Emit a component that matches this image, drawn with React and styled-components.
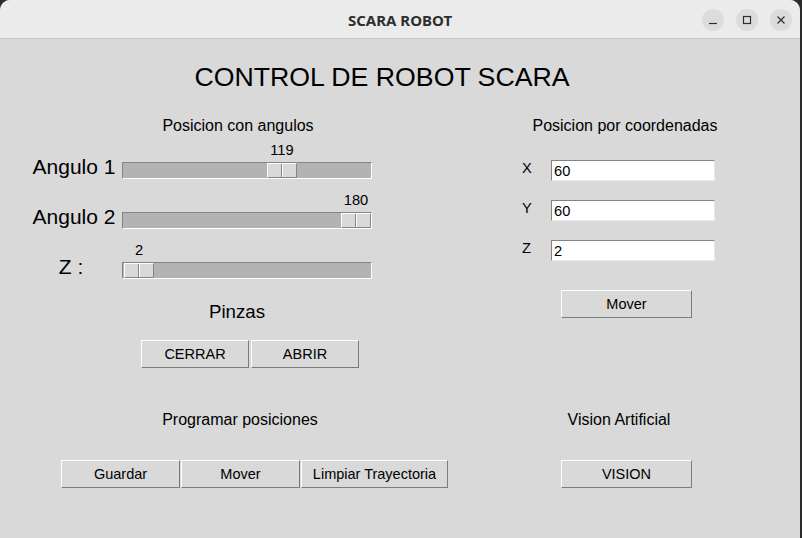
import React from "react";
import styled, { createGlobalStyle } from "styled-components";

const GlobalStyle = createGlobalStyle`
  html, body {
    margin: 0;
    padding: 0;
    background: #2a2a2a;
  }
  body {
    width: 802px;
    height: 538px;
    overflow: hidden;
    font-family: "Liberation Sans", Arial, sans-serif;
  }
`;

const Window = styled.div`
  width: 800px;
  height: 538px;
  display: flex;
  flex-direction: column;
  background: #d9d9d9;
  border-radius: 10px 10px 0 0;
  overflow: hidden;
`;

const TitleBar = styled.div`
  height: 38px;
  flex: none;
  display: grid;
  grid-template-columns: 1fr auto 1fr;
  align-items: center;
  background: #ebebeb;
  border-bottom: 1px solid #c6c6c6;
`;

const WinTitle = styled.div`
  grid-column: 2;
  font-family: "Noto Sans", "DejaVu Sans", sans-serif;
  font-weight: 700;
  font-size: 15px;
  color: #2e2e2e;
  padding-top: 2px;
`;

const WinControls = styled.div`
  grid-column: 3;
  justify-self: end;
  display: flex;
  gap: 12px;
  padding-right: 8px;
  padding-top: 2px;
`;

const WinButton = styled.div`
  width: 22px;
  height: 22px;
  border-radius: 50%;
  background: #dcdcdc;
  display: flex;
  align-items: center;
  justify-content: center;
`;

const Body = styled.div`
  flex: 1;
  display: flex;
  flex-direction: column;
`;

const Heading = styled.h1`
  margin: 23px 0 0 0;
  padding-right: 36px;
  font-weight: 400;
  font-size: 26.7px;
  line-height: 30px;
  text-align: center;
  color: #000;
`;

const Panels = styled.div`
  margin-top: 18px;
  display: grid;
  grid-template-columns: 480px 290px;
  grid-template-rows: 294px auto;
`;

const Column = styled.div`
  display: flex;
  flex-direction: column;
`;

const SectionTitle = styled.div`
  font-size: 16px;
  line-height: 32px;
  text-align: center;
  color: #000;
  padding-right: ${(p) => p.$shift || 0}px;
`;

const ScaleRow = styled.div`
  display: grid;
  grid-template-columns: 122px 250px;
  align-items: end;
  margin-bottom: 13px;
`;

const ScaleLabel = styled.div`
  padding-left: 26px;
  font-size: 21px;
  line-height: 24px;
  text-align: center;
  white-space: pre;
  color: #000;
`;

const ScaleBox = styled.div`
  display: flex;
  flex-direction: column;
`;

const ValueText = styled.div`
  width: 30px;
  font-size: 14.67px;
  line-height: 17px;
  text-align: center;
  margin-bottom: 3px;
  color: #000;
`;

const Trough = styled.div`
  box-sizing: border-box;
  width: 250px;
  height: 17px;
  background: #b3b3b3;
  border: 1px solid;
  border-color: #858585 #ffffff #ffffff #858585;
  display: flex;
`;

const Thumb = styled.div`
  box-sizing: border-box;
  width: 30px;
  height: 15px;
  background: #d9d9d9;
  border: 1px solid;
  border-color: #ffffff #858585 #858585 #ffffff;
  display: flex;
  justify-content: center;
`;

const ThumbLine = styled.div`
  width: 1px;
  height: 100%;
  background: #858585;
  border-right: 1px solid #ffffff;
`;

const SubTitle = styled.div`
  margin-top: 8px;
  font-size: 18.7px;
  line-height: 24px;
  text-align: center;
  padding-right: 6px;
  color: #000;
`;

const ButtonRow = styled.div`
  display: flex;
  gap: ${(p) => p.$gap}px;
  padding-left: ${(p) => p.$left}px;
  margin-top: ${(p) => p.$top}px;
`;

const TkButton = styled.button`
  box-sizing: border-box;
  width: ${(p) => p.$w}px;
  height: 28px;
  padding: 0;
  margin: 0;
  background: #d9d9d9;
  border: 1px solid;
  border-color: #ffffff #7c7c7c #7c7c7c #ffffff;
  border-radius: 0;
  font-family: "Liberation Sans", Arial, sans-serif;
  font-size: 14.5px;
  color: #000;
`;

const EntryGrid = styled.div`
  margin-top: 18px;
  display: grid;
  grid-template-columns: 29px 164px;
  row-gap: 19px;
  padding-left: 42px;
`;

const EntryLabel = styled.div`
  font-size: 14.67px;
  line-height: 16px;
  color: #000;
`;

const Entry = styled.input`
  box-sizing: border-box;
  width: 164px;
  height: 21px;
  margin: 0;
  padding: 0 2px;
  background: #ffffff;
  border: 1px solid;
  border-color: #838383 #e8e8e8 #e8e8e8 #838383;
  font-family: "Liberation Sans", Arial, sans-serif;
  font-size: 14.67px;
  color: #000;
  outline: none;
`;

function Scale({ label, value, min, max }) {
  const travel = 248 - 30;
  const offset = Math.round(((value - min) / (max - min)) * travel);
  return (
    <ScaleRow>
      <ScaleLabel>{label}</ScaleLabel>
      <ScaleBox>
        <ValueText style={{ marginLeft: offset + 1 }}>{value}</ValueText>
        <Trough>
          <Thumb style={{ marginLeft: offset }}>
            <ThumbLine />
          </Thumb>
        </Trough>
      </ScaleBox>
    </ScaleRow>
  );
}

export default function App() {
  return (
    <>
      <GlobalStyle />
      <Window>
        <TitleBar>
          <WinTitle>SCARA ROBOT</WinTitle>
          <WinControls>
            <WinButton>
              <svg width="10" height="10" viewBox="0 0 10 10">
                <path d="M1 8.5h8" stroke="#2e2e2e" strokeWidth="1.2" />
              </svg>
            </WinButton>
            <WinButton>
              <svg width="10" height="10" viewBox="0 0 10 10">
                <rect x="1.5" y="1.5" width="7" height="7" fill="none" stroke="#2e2e2e" strokeWidth="1.2" />
              </svg>
            </WinButton>
            <WinButton>
              <svg width="10" height="10" viewBox="0 0 10 10">
                <path d="M1.5 1.5l7 7M8.5 1.5l-7 7" stroke="#2e2e2e" strokeWidth="1.2" />
              </svg>
            </WinButton>
          </WinControls>
        </TitleBar>
        <Body>
          <Heading>CONTROL DE ROBOT SCARA</Heading>
          <Panels>
            <Column>
              <SectionTitle $shift={4}>Posicion con angulos</SectionTitle>
              <Scale label="Angulo 1" value={119} min={0} max={180} />
              <Scale label="Angulo 2" value={180} min={0} max={180} />
              <Scale label="Z : " value={2} min={0} max={400} />
              <SubTitle>Pinzas</SubTitle>
              <ButtonRow $gap={2} $left={141} $top={16}>
                <TkButton $w={108}>CERRAR</TkButton>
                <TkButton $w={108}>ABRIR</TkButton>
              </ButtonRow>
            </Column>
            <Column>
              <SectionTitle>Posicion por coordenadas</SectionTitle>
              <EntryGrid>
                <EntryLabel>X</EntryLabel>
                <Entry defaultValue="60" />
                <EntryLabel>Y</EntryLabel>
                <Entry defaultValue="60" />
                <EntryLabel>Z</EntryLabel>
                <Entry defaultValue="2" />
              </EntryGrid>
              <ButtonRow $gap={0} $left={81} $top={29}>
                <TkButton $w={131}>Mover</TkButton>
              </ButtonRow>
            </Column>
            <Column>
              <SectionTitle>Programar posiciones</SectionTitle>
              <ButtonRow $gap={1} $left={61} $top={24}>
                <TkButton $w={119}>Guardar</TkButton>
                <TkButton $w={119}>Mover</TkButton>
                <TkButton $w={147}>Limpiar Trayectoria</TkButton>
              </ButtonRow>
            </Column>
            <Column>
              <SectionTitle $shift={12}>Vision Artificial</SectionTitle>
              <ButtonRow $gap={0} $left={81} $top={24}>
                <TkButton $w={131}>VISION</TkButton>
              </ButtonRow>
            </Column>
          </Panels>
        </Body>
      </Window>
    </>
  );
}
